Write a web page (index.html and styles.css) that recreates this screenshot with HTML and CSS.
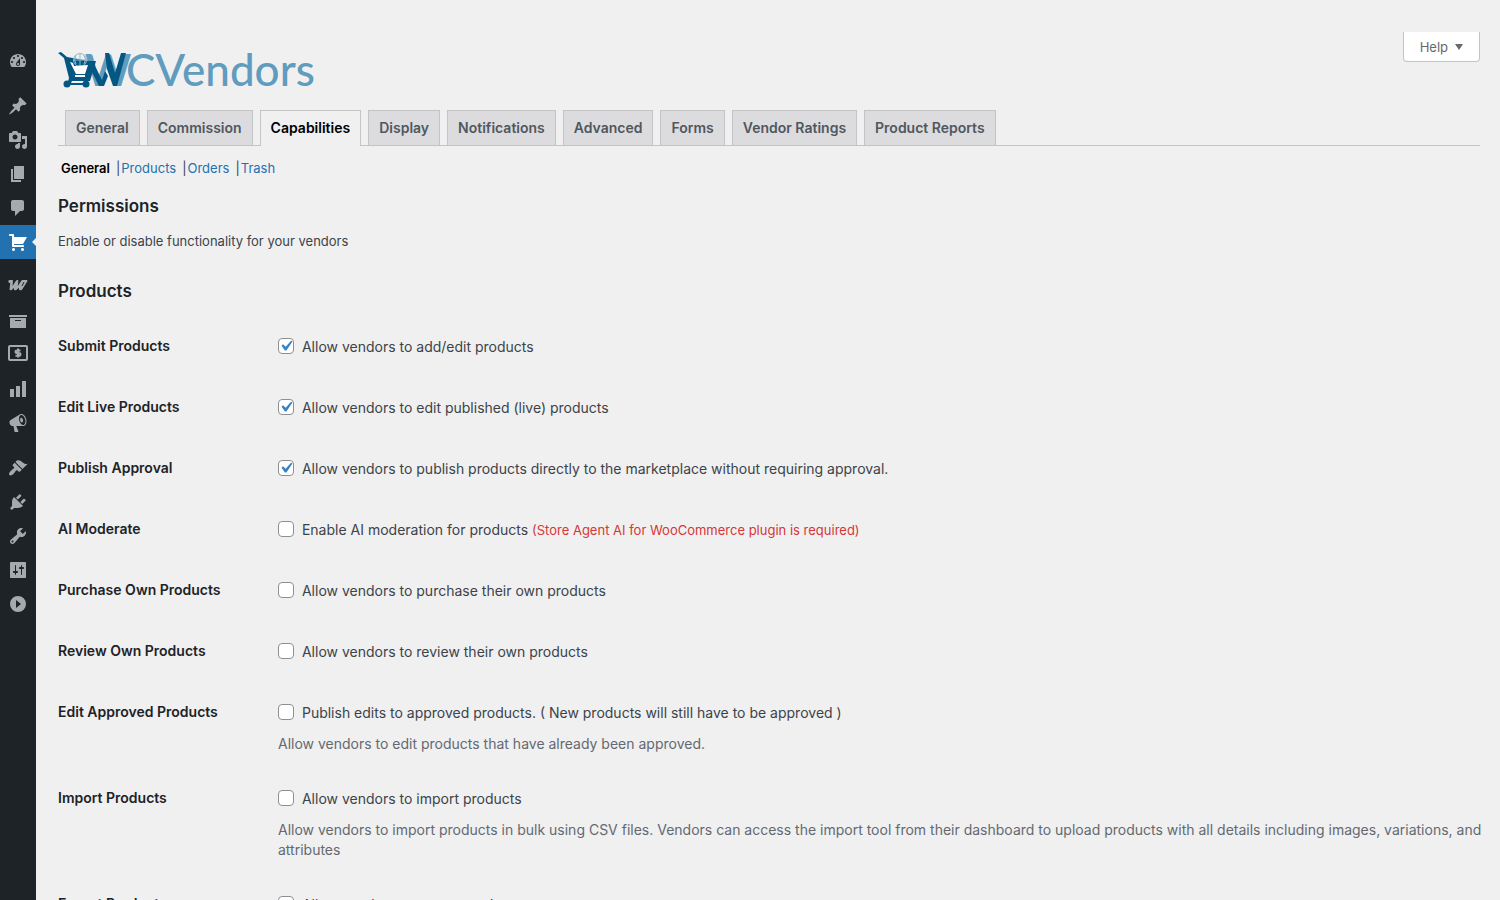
FILE: index.html
```html
<!DOCTYPE html>
<html lang="en">
<head>
    <meta charset="UTF-8">
    <meta name="viewport" content="width=device-width, initial-scale=1.0">
    <title>WC Vendors Settings</title>
    <link rel="stylesheet" href="styles.css">
</head>
<body>
    <nav class="admin-menu" aria-label="Main menu">
        <a href="#" aria-label="Dashboard"><svg viewBox="0 0 20 20"><path fill-rule="evenodd" d="M3.76 16h12.48c1.1-1.37 1.76-3.11 1.76-5 0-4.42-3.58-8-8-8s-8 3.58-8 8c0 1.89.66 3.63 1.76 5zM10 4c.55 0 1 .45 1 1s-.45 1-1 1-1-.45-1-1 .45-1 1-1zM6 6c.55 0 1 .45 1 1s-.45 1-1 1-1-.45-1-1 .45-1 1-1zm8 0c.55 0 1 .45 1 1s-.45 1-1 1-1-.45-1-1 .45-1 1-1zm-5.37 5.55L12 7v6c0 1.1-.9 2-2 2s-2-.9-2-2c0-.57.24-1.08.63-1.45zM4 10c.55 0 1 .45 1 1s-.45 1-1 1-1-.45-1-1 .45-1 1-1zm12 0c.55 0 1 .45 1 1s-.45 1-1 1-1-.45-1-1 .45-1 1-1zm-5 3c0-.55-.45-1-1-1s-1 .45-1 1 .45 1 1 1 1-.45 1-1z"/></svg></a>
        <a href="#" class="group" aria-label="Posts"><svg viewBox="0 0 20 20"><path d="M10.44 3.02l1.82-1.82 6.36 6.35-1.83 1.82c-1.05-.68-2.48-.57-3.41.36l-.75.75c-.92.93-1.04 2.35-.35 3.41l-1.83 1.82-2.41-2.41-2.8 2.79c-.42.42-3.38 2.71-3.8 2.29s1.86-3.39 2.28-3.81l2.79-2.79L4.1 9.36l1.83-1.82c1.05.69 2.48.57 3.4-.36l.75-.75c.93-.92 1.05-2.35.36-3.41z"/></svg></a>
        <a href="#" aria-label="Media"><svg viewBox="0 0 20 20"><path fill-rule="evenodd" d="M13 11V4c0-.55-.45-1-1-1h-1.67L9 1H5L3.67 3H2c-.55 0-1 .45-1 1v7c0 .55.45 1 1 1h10c.55 0 1-.45 1-1zM7 4.5c1.38 0 2.5 1.12 2.5 2.5S8.38 9.5 7 9.5 4.5 8.38 4.5 7 5.62 4.5 7 4.5zM14 6h5v10.5c0 1.38-1.12 2.5-2.5 2.5S14 17.88 14 16.5s1.12-2.5 2.5-2.5c.17 0 .34.02.5.05V9h-3V6zm-4 8.05V13h2v3.5c0 1.38-1.12 2.5-2.5 2.5S7 17.88 7 16.5 8.12 14 9.5 14c.17 0 .34.02.5.05z"/></svg></a>
        <a href="#" aria-label="Pages"><svg viewBox="0 0 20 20"><path d="M6 15V2h10v13H6zm-1 1h8v2H3V5h2v11z"/></svg></a>
        <a href="#" aria-label="Comments"><svg viewBox="0 0 20 20"><path d="M5 2h9c1.1 0 2 .9 2 2v7c0 1.1-.9 2-2 2h-2l-5 5v-5H5c-1.1 0-2-.9-2-2V4c0-1.1.9-2 2-2z"/></svg></a>
        <a href="#" class="current" aria-label="WC Vendors"><svg viewBox="0 0 20 20"><path d="M6 13h9c.55 0 1 .45 1 1s-.45 1-1 1H5c-.55 0-1-.45-1-1V4H2c-.55 0-1-.45-1-1s.45-1 1-1h3c.55 0 1 .45 1 1v2h13l-4 7H6v1zm-.5 3c.83 0 1.5.67 1.5 1.5S6.33 19 5.5 19 4 18.33 4 17.5 4.67 16 5.5 16zm9 0c.83 0 1.5.67 1.5 1.5s-.67 1.5-1.5 1.5-1.5-.67-1.5-1.5.67-1.5 1.5-1.5z"/></svg></a>
        <a href="#" class="group" aria-label="WooCommerce"><svg viewBox="0 0 20 20"><path d="M1.800 3H4c.7 0 1.100.4 1 1.200L4.500 9l3.300-5c.4-.6.8-1 1.500-1 .8 0 1.100.5 1 1.200L9.800 9l3.300-5c.4-.6.9-1 1.600-1h3.600c1 0 1.400.7.9 1.500l-4.700 7.500c-.5.8-1.100 1.300-2 1.300-1 0-1.500-.6-1.500-1.600v-1L9.200 12.300c-.5.6-1 1-1.800 1-1 0-1.500-.6-1.600-1.600l-.1-1-1.200 1.600c-.5.7-1 1-1.700 1-.8 0-1.300-.5-1.200-1.400L2.200 6C1 6 .3 5.400.3 4.500.3 3.600.9 3 1.800 3z"/><path class="notch" d="M16 5l-2 4"/></svg></a>
        <a href="#" aria-label="Products"><svg viewBox="0 0 20 20"><path fill-rule="evenodd" d="M19 4v2H1V4h18zM2 7h16v10H2V7zm11 3V9H7v1h6z"/></svg></a>
        <a href="#" aria-label="Payments"><svg viewBox="0 0 20 20"><rect x="1" y="1" width="18" height="14" rx="1" class="line"/><path class="line" d="M12.500 5.500H9.200c-2.200 0-2.200 2.600 0 2.600h1.600c2.200 0 2.200 2.600 0 2.600H7.500M10 3.500v9"/></svg></a>
        <a href="#" aria-label="Analytics"><svg viewBox="0 0 20 20"><path d="M18 18V2h-4v16h4zm-6 0V7H8v11h4zm-6 0v-8H2v8h4z"/></svg></a>
        <a href="#" aria-label="Marketing"><svg viewBox="0 0 20 20"><path fill-rule="evenodd" d="M18.150 5.940c.46 1.620.38 3.220-.02 4.480-.42 1.280-1.260 2.180-2.300 2.480-.16.06-.26.06-.4.06-.06.02-.12.02-.18.02-.06.02-.14.02-.22.02h-6.800l2.220 5.500c.02.14-.06.26-.14.34-.08.1-.24.16-.34.16H6.950c-.1 0-.26-.06-.34-.16-.08-.08-.16-.2-.14-.34l-1-5.500H4.250l-.02-.02c-.5.06-1.080-.18-1.540-.62s-.88-1.080-1.060-1.880c-.24-.8-.2-1.560-.02-2.200.18-.62.58-1.080 1.060-1.300l.02-.02 9-5.400c.1-.06.18-.1.24-.16.06-.04.14-.08.24-.12.16-.08.28-.12.5-.18 1.040-.3 2.240.1 3.220.98s1.840 2.240 2.260 3.860zm-2.580 5.980h-.02c.4-.1.74-.34 1.040-.7.58-.7.86-1.760.86-3.040 0-.64-.1-1.300-.28-1.980-.34-1.360-1.020-2.500-1.780-3.240s-1.680-1.100-2.460-.88c-.82.22-1.400.96-1.700 2-.32 1.040-.28 2.360.06 3.720.38 1.360 1 2.500 1.800 3.240.78.74 1.620 1.100 2.480.88zm-2.540-7.080c.22-.04.42-.02.62.04.38.16.76.48 1.020 1s.42 1.200.42 1.780c0 .3-.04.56-.12.8-.18.48-.44.84-.86.94-.34.1-.8-.06-1.140-.4s-.64-.86-.78-1.500c-.18-.62-.12-1.240.02-1.720s.48-.84.82-.94z"/></svg></a>
        <a href="#" class="group" aria-label="Appearance"><svg viewBox="0 0 20 20"><path d="M14.480 11.060L7.410 3.990l1.500-1.500c.5-.56 2.300-.47 3.510.32 1.210.8 1.430 1.280 2.910 2.100 1.180.64 2.450 1.260 4.450.85zm-.71.71L6.700 4.700 4.930 6.470c-.39.39-.39 1.020 0 1.410l1.060 1.060c.39.39.39 1.030 0 1.420-.6.6-1.430 1.110-2.210 1.690-.35.26-.7.53-1.010.84C1.430 14.230.4 16.080 1.400 17.070c.99 1 2.840-.03 4.180-1.360.31-.31.58-.66.85-1.020.57-.78 1.080-1.610 1.690-2.210.39-.39 1.020-.39 1.410 0l1.060 1.060c.39.39 1.020.39 1.410 0z"/></svg></a>
        <a href="#" aria-label="Plugins"><svg viewBox="0 0 20 20"><path d="M13.110 4.360L9.870 7.600 8 5.730l3.240-3.240c.35-.34 1.050-.2 1.560.32.52.51.66 1.210.31 1.550zm-8 1.770l.91-1.120 9.010 9.010-1.190.84c-.71.71-2.630 1.160-3.820 1.160H6.140L4.900 17.260c-.59.59-1.540.59-2.120 0-.59-.58-.59-1.530 0-2.120l1.240-1.240v-3.880c0-1.130.4-3.190 1.090-3.890zm7.260 3.970l3.240-3.240c.34-.35 1.040-.21 1.550.31.52.51.66 1.210.31 1.550l-3.240 3.250z"/></svg></a>
        <a href="#" aria-label="Tools"><svg viewBox="0 0 20 20"><path fill-rule="evenodd" d="M16.680 9.770c-1.340 1.340-3.300 1.670-4.950.99l-5.410 6.520c-.99.99-2.590.99-3.580 0s-.99-2.590 0-3.570l6.520-5.420c-.68-1.650-.35-3.610.99-4.950 1.280-1.280 3.120-1.620 4.720-1.060l-2.890 2.890 2.820 2.820 2.860-2.870c.53 1.580.18 3.390-1.080 4.650zM3.810 16.210c.4.39 1.040.39 1.430 0 .4-.4.4-1.040 0-1.430-.39-.4-1.030-.4-1.430 0-.39.39-.39 1.030 0 1.430z"/></svg></a>
        <a href="#" aria-label="Settings"><svg viewBox="0 0 20 20"><path fill-rule="evenodd" d="M18 17V3c0-.55-.45-1-1-1H3c-.55 0-1 .45-1 1v14c0 .55.45 1 1 1h14c.55 0 1-.45 1-1zM8 11h1c.55 0 1 .45 1 1s-.45 1-1 1H8v1.500c0 .28-.22.5-.5.5s-.5-.22-.5-.5V13H6c-.55 0-1-.45-1-1s.45-1 1-1h1V5.500c0-.28.22-.5.5-.5s.5.22.5.5V11zm5-2h-1c-.55 0-1-.45-1-1s.45-1 1-1h1V5.500c0-.28.22-.5.5-.5s.5.22.5.5V7h1c.55 0 1 .45 1 1s-.45 1-1 1h-1v5.500c0 .28-.22.5-.5.5s-.5-.22-.5-.5V9z"/></svg></a>
        <button type="button" aria-label="Expand menu"><svg viewBox="0 0 20 20"><path fill-rule="evenodd" d="M10 2a8 8 0 1 1 0 16 8 8 0 0 1 0-16zM8 6v8l5-4z"/></svg></button>
    </nav>

    <main class="content">
        <header class="top">
            <svg class="logo" viewBox="0 0 270 50" role="img" aria-label="WCVendors">
                <text x="27" y="40" class="initial">W</text>
                <text x="68" y="40" class="word">CVendors</text>
                <!-- dark ribbons across the initial -->
                <path class="dark" d="M29 16h6l9 18 3-9 3 5-4 10h-5zM47 7h4l6 20 6-20h5L59 40h-4l-6-17z"/>
                <!-- cart -->
                <path class="dark" d="M0 7l3-1 6 5 22 4h7l-6 20H14l-2 4h-3l2-7L6 12z"/>
                <circle class="globe" cx="22" cy="14" r="6.500"/>
                <path class="globe" d="M16 14h12M22 8v12M18 9q-3 5 0 9M26 9q3 5 0 9"/>
                <path class="paper" d="M12 16l3 1 1 3 14-1-3 9H18z"/>
                <path class="paper" d="M17 29h10v2H17z"/>
                <path class="axle" d="M9 38h19"/>
                <circle class="dark" cx="9" cy="38" r="3.500"/>
                <circle class="dark" cx="28" cy="38" r="3.500"/>
            </svg>
            <button type="button" class="help">Help <span class="arrow"></span></button>
        </header>

        <nav class="tabs">
            <a href="#">General</a>
            <a href="#">Commission</a>
            <a href="#" class="active">Capabilities</a>
            <a href="#">Display</a>
            <a href="#">Notifications</a>
            <a href="#">Advanced</a>
            <a href="#">Forms</a>
            <a href="#">Vendor Ratings</a>
            <a href="#">Product Reports</a>
        </nav>

        <ul class="sections">
            <li><a href="#" class="active">General</a></li>
            <li><a href="#">Products</a></li>
            <li><a href="#">Orders</a></li>
            <li><a href="#">Trash</a></li>
        </ul>

        <h2>Permissions</h2>
        <p class="intro">Enable or disable functionality for your vendors</p>

        <h2>Products</h2>
        <table class="form-table">
            <tr>
                <th scope="row">Submit Products</th>
                <td><label><input type="checkbox" checked> Allow vendors to add/edit products</label></td>
            </tr>
            <tr>
                <th scope="row">Edit Live Products</th>
                <td><label><input type="checkbox" checked> Allow vendors to edit published (live) products</label></td>
            </tr>
            <tr>
                <th scope="row">Publish Approval</th>
                <td><label><input type="checkbox" checked> Allow vendors to publish products directly to the marketplace without requiring approval.</label></td>
            </tr>
            <tr>
                <th scope="row">AI Moderate</th>
                <td><label><input type="checkbox"> Enable AI moderation for products <span class="required">(Store Agent AI for WooCommerce plugin is required)</span></label></td>
            </tr>
            <tr>
                <th scope="row">Purchase Own Products</th>
                <td><label><input type="checkbox"> Allow vendors to purchase their own products</label></td>
            </tr>
            <tr>
                <th scope="row">Review Own Products</th>
                <td><label><input type="checkbox"> Allow vendors to review their own products</label></td>
            </tr>
            <tr>
                <th scope="row">Edit Approved Products</th>
                <td>
                    <label><input type="checkbox"> Publish edits to approved products. ( New products will still have to be approved )</label>
                    <p class="description">Allow vendors to edit products that have already been approved.</p>
                </td>
            </tr>
            <tr>
                <th scope="row">Import Products</th>
                <td>
                    <label><input type="checkbox"> Allow vendors to import products</label>
                    <p class="description">Allow vendors to import products in bulk using CSV files. Vendors can access the import tool from their dashboard to upload products with all details including images, variations, and attributes</p>
                </td>
            </tr>
            <tr>
                <th scope="row">Export Products</th>
                <td><label><input type="checkbox"> Allow vendors to export products</label></td>
            </tr>
        </table>
    </main>
</body>
</html>
```
FILE: styles.css
```css
* { box-sizing: border-box; }
body { display: flex; height: 100vh; margin: 0; overflow: hidden; background: #f0f0f0; color: #3c434a; font-family: Inter, "Liberation Sans", sans-serif; font-size: 13px; line-height: 20px; }
a { color: #2271b1; text-decoration: none; }

/* Collapsed admin menu */
.admin-menu { flex: none; width: 36px; padding-top: 44px; background: #1d2327; }
.admin-menu a, .admin-menu button { position: relative; display: flex; align-items: center; width: 36px; height: 34px; padding: 0 8px; border: none; background: none; color: #a7aaad; cursor: pointer; }
.admin-menu .group { margin-top: 11px; }
.admin-menu svg { width: 20px; height: 20px; fill: currentColor; }
.admin-menu .line { fill: none; stroke: currentColor; stroke-width: 2; }
.admin-menu .notch { fill: none; stroke: #1d2327; stroke-width: 1; }
.admin-menu .current { background: #2271b1; color: #fff; }
.admin-menu .current::after { content: ""; position: absolute; right: 0; top: 13px; border: 4px solid transparent; border-left: none; border-right-color: #f0f0f0; }

.content { flex: 1; min-width: 0; padding: 32px 20px 0 22px; }

/* Logo and help */
.top { display: flex; justify-content: space-between; align-items: flex-start; height: 78px; }
.logo { width: 270px; height: 50px; margin-top: 14px; }
.logo text { fill: #5f9cbe; font-family: Lato, sans-serif; font-size: 44px; font-weight: 500; }
.logo .initial { font-weight: 700; }
.logo .dark { fill: #045683; }
.logo .paper { fill: #fff; }
.logo .axle { stroke: #045683; stroke-width: 2; }
.logo .globe { fill: none; stroke: #8fb9d0; stroke-width: 1; }
.help { display: flex; align-items: center; gap: 7px; height: 30px; padding: 0 16px; border: 1px solid #c3c4c7; border-top: none; border-radius: 0 0 4px 4px; background: #fff; color: #646970; font: inherit; cursor: pointer; }
.arrow { border: 4px solid transparent; border-top: 6px solid #646970; border-bottom: none; }

/* Tabs */
.tabs { display: flex; gap: 7px; padding-left: 7px; border-bottom: 1px solid #c3c4c7; }
.tabs a { height: 35px; padding: 5px 10px; border: 1px solid #c3c4c7; border-bottom: none; background: #dcdcde; color: #50575e; font-size: 14px; font-weight: 600; line-height: 24px; }
.tabs .active { height: 36px; margin-bottom: -1px; background: #f0f0f0; color: #000; }

.sections { display: flex; margin: 12px 0 0; padding: 0 0 0 3px; list-style: none; }
.sections li + li::before { content: "|"; margin: 0 1px 0 6px; }
.sections .active { color: #000; font-weight: 600; }

h2 { margin: 16px 0 13px; color: #1d2327; font-size: 17px; font-weight: 600; line-height: 24px; }
.intro { margin: 0 0 28px; }

/* Settings table */
.form-table { width: 100%; margin-top: 10px; border-collapse: collapse; font-size: 14px; }
.form-table th { width: 220px; padding: 20px 10px 20px 0; color: #1d2327; font-weight: 600; text-align: left; vertical-align: top; }
.form-table td { padding: 21px 0 20px; vertical-align: top; }
.form-table label { display: block; }
.form-table input { appearance: none; width: 16px; height: 16px; margin: -4px 4px 0 0; border: 1px solid #8c8f94; border-radius: 4px; background: #fff; vertical-align: middle; }
.form-table input:checked { background: #fff url("data:image/svg+xml,%3Csvg xmlns='http://www.w3.org/2000/svg' viewBox='0 0 20 20'%3E%3Cpath d='M14.83 4.89l1.34.94-5.810 8.380H9.020L5.780 9.670l1.340-1.250 2.570 2.400z' fill='%233582c4'/%3E%3C/svg%3E") center / 21px no-repeat; }
.required { color: #d63638; font-size: 13px; }
/* description may run into the page gutter */
.description { margin: 11px -12px -6px 0; color: #646970; }
```
